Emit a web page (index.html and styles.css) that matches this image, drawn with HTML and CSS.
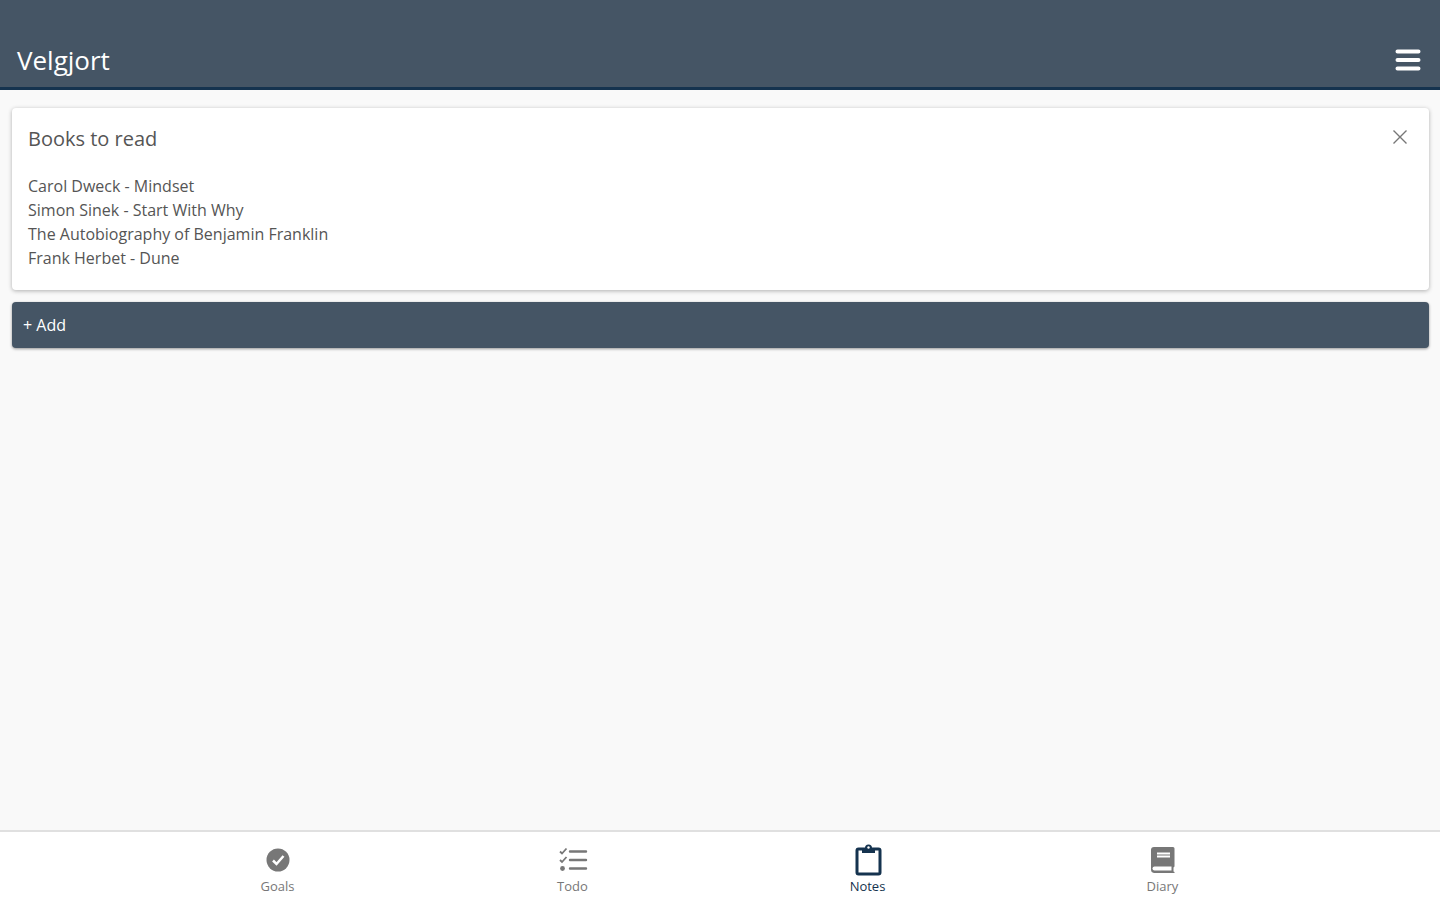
FILE: index.html
```html
<!DOCTYPE html>
<html lang="en">
<head>
	<meta charset="UTF-8" />
	<meta name="viewport" content="width=device-width, initial-scale=1.0" />
	<title>Velgjort</title>
	<link rel="stylesheet" href="styles.css">
</head>
<body>

	<header class="header">
		<h1 class="header__title">Velgjort</h1>
		<button class="header__menu" type="button" aria-label="Menu">
			<svg width="26" height="24" viewBox="0 0 26 24"><path d="M2.500 3.500h21M2.500 12h21M2.500 20.500h21" fill="none" stroke="currentColor" stroke-width="4" stroke-linecap="round" /></svg>
		</button>
	</header>

	<main class="notes">
		<article class="note">
			<div class="note__header">
				<h2 class="note__title">Books to read</h2>
				<button class="note__close" type="button" aria-label="Delete note">
					<svg width="16" height="16" viewBox="0 0 16 16"><path d="M1.500 1.500l13 13M14.500 1.500l-13 13" fill="none" stroke="currentColor" stroke-width="1.400" /></svg>
				</button>
			</div>
			<p class="note__text">Carol Dweck - Mindset<br>Simon Sinek - Start With Why<br>The Autobiography of Benjamin Franklin<br>Frank Herbet - Dune</p>
		</article>
		<button class="notes__add" type="button">+ Add</button>
	</main>

	<nav class="tabs">
		<div class="tabs__list">
			<a class="tabs__link" href="#goals">
				<svg class="tabs__icon" viewBox="0 0 32 32"><circle cx="16" cy="16" r="11.500" fill="currentColor" /><path d="M11 16.500l3.500 3.500 7-8" fill="none" stroke="#fff" stroke-width="2.500" /></svg>
				Goals
			</a>
			<a class="tabs__link" href="#todo">
				<svg class="tabs__icon" viewBox="0 0 32 32" fill="none" stroke="currentColor"><path d="M13 7.500h16M13 16h16M13 24.500h16" stroke-width="2.400" stroke-linecap="round" /><path d="M3 7.500l2 2 4.500-5M3 16l2 2 4.500-5" stroke-width="1.800" /><circle cx="5.500" cy="24.500" r="2.400" fill="currentColor" stroke="none" /></svg>
				Todo
			</a>
			<a class="tabs__link tabs__link--active" href="#notes" aria-current="page">
				<svg class="tabs__icon" viewBox="0 0 32 32"><rect x="5" y="5" width="23" height="25" rx="1.500" fill="none" stroke="currentColor" stroke-width="3" /><path d="M10 4h3a3.500 3.500 0 0 1 7 0h3v5H10z" fill="currentColor" /><circle cx="16.500" cy="3.500" r="1.200" fill="#fff" /></svg>
				Notes
			</a>
			<a class="tabs__link" href="#diary">
				<svg class="tabs__icon" viewBox="0 0 32 32"><path d="M7 3h19a1.500 1.500 0 0 1 1.500 1.500V22.500l-1 1v4l1 .5v1H7a3.500 3.500 0 0 1-3-3.500V6a3 3 0 0 1 3-3z" fill="currentColor" /><path d="M10 8.500h13v5H10z" fill="#fff" /><path d="M10 11h13" stroke="currentColor" stroke-width="1" /><path d="M7.500 22.500h17v4h-17a2 2 0 0 1 0-4z" fill="#fff" /></svg>
				Diary
			</a>
		</div>
	</nav>

</body>
</html>
```
FILE: styles.css
```css
* {
	box-sizing: border-box;
}

body {
	display: flex;
	flex-direction: column;
	min-height: 100vh;
	margin: 0;
	background-color: #f9f9f9;
	color: #555;
	font-family: "Open Sans", "Noto Sans", sans-serif;
	font-size: 16px;
}

button {
	border: 0;
	background: none;
	font: inherit;
	cursor: pointer;
}

.header {
	display: flex;
	align-items: center;
	justify-content: space-between;
	padding: 32px 19px 0 17px;
	height: 90px;
	border-bottom: 3px solid #15334f;
	background-color: #455565;
	color: #fff;
}

.header__title {
	margin: 0;
	font-size: 26px;
	font-weight: 400;
	line-height: 56px;
}

.header__menu {
	display: flex;
	padding: 0;
	color: #fff;
}

.notes {
	flex: 1;
	padding: 18px 11px 12px 12px;
}

.note {
	padding: 16px;
	margin-bottom: 12px;
	border-radius: 4px;
	background-color: #fff;
	box-shadow: 0 1px 4px rgba(0, 0, 0, 0.3);
}

.note__header {
	display: flex;
	align-items: flex-start;
	justify-content: space-between;
	margin-bottom: 20px;
}

.note__title {
	margin: 0;
	font-size: 20px;
	font-weight: 400;
	line-height: 30px;
}

.note__close {
	display: flex;
	padding: 5px;
	color: #777;
}

.note__text {
	margin: 0 0 4px;
	line-height: 24px;
}

.notes__add {
	display: block;
	width: 100%;
	padding: 11px;
	border-radius: 4px;
	background-color: #455565;
	box-shadow: 0 1px 3px rgba(0, 0, 0, 0.4);
	color: #fff;
	line-height: 24px;
	text-align: left;
}

.tabs {
	border-top: 2px solid #e0e0e0;
	background-color: #fff;
}

.tabs__list {
	display: grid;
	grid-template-columns: repeat(4, 1fr);
	max-width: 1180px;
	margin: 0 auto;
}

.tabs__link {
	display: flex;
	flex-direction: column;
	align-items: center;
	padding: 12px 0 4px;
	color: #777;
	font-size: 13px;
	line-height: 20px;
	text-decoration: none;
}

.tabs__link--active {
	color: #15334f;
}

.tabs__icon {
	width: 32px;
	height: 32px;
}
```
